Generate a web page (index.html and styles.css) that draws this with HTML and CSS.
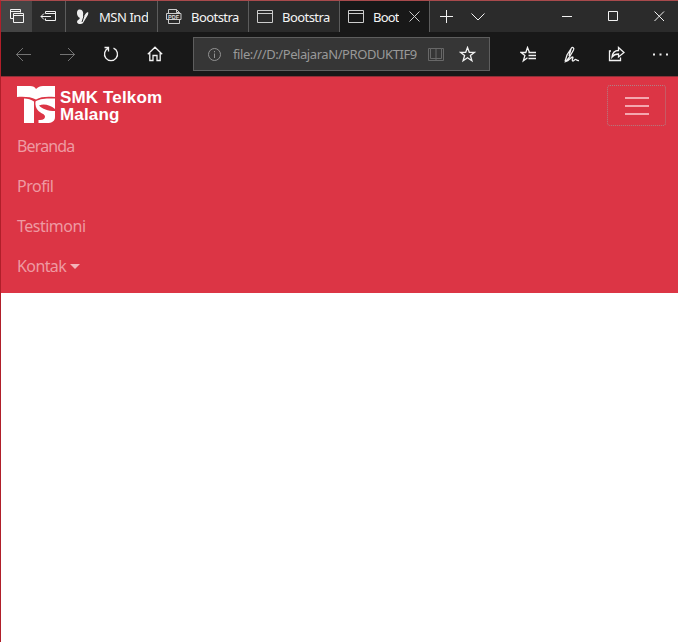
FILE: index.html
```html
<!DOCTYPE html>
<html lang="id">
<head>
<meta charset="utf-8">
<title>Bootstrap</title>
<link rel="stylesheet" href="styles.css">
</head>
<body>
<div class="window">
  <div class="tabs">
    <div class="tool lit"><svg width="16" height="16" viewBox="0 0 16 16"><path d="M4 10.500H1.500V1.500H11.500V4.500M1.500 3.500H11.500M4.500 5.500H14.500V14.500H4.500ZM4.500 7.500H14.500"/></svg></div>
    <div class="tool set"><svg width="17" height="12" viewBox="0 0 17 12"><path d="M5.500 3.500V1.500H15.500V10.500H5.500V8.500M5.500 3.500H15.500M1 6.500H11M4 3.500L1 6.500L4 9.500"/></svg></div>
    <div class="tab t1"><svg width="14" height="16" viewBox="0 0 14 16"><path class="fill" d="M2 1C5-.5 8 2 7 6L7 8C9 7 9 4 12 3C13 5 11 7 10 9L7 14C5 16 1 15 1 13C1 11 3 11 4 9C1 8 0 3 2 1Z"/><path class="cut" d="M8 7L6 13"/></svg><span>MSN Ind</span></div>
    <div class="tab t2"><svg width="16" height="17" viewBox="0 0 16 17"><path d="M2.500 5V1.500H10.500L13.500 4.500V5M10.500 1.500V4.500H13.500M2.500 12V15.500H13.500V12M.5 5.500H15V11.500H.5Z"/><text x="2" y="10.500">PDF</text></svg><span>Bootstra</span></div>
    <div class="tab t3"><svg width="17" height="14" viewBox="0 0 17 14"><path d="M.5.500H15.500V12.500H.5ZM.5 3.500H15.500"/></svg><span>Bootstra</span></div>
    <div class="tab t4"><svg width="17" height="14" viewBox="0 0 17 14"><path d="M.5.500H15.500V12.500H.5ZM.5 3.500H15.500"/></svg><span>Boot</span><svg class="x" width="11" height="11" viewBox="0 0 11 11"><path d="M.5.500L10.500 10.500M10.500.5L.5 10.500"/></svg></div>
    <div class="new"><svg width="13" height="13" viewBox="0 0 13 13"><path d="M0 6.500H13M6.500 0V13"/></svg></div>
    <div class="more"><svg width="14" height="8" viewBox="0 0 14 8"><path d="M.5.500L7 7L13.500.5"/></svg></div>
    <div class="caption">
      <div><svg width="11" height="11" viewBox="0 0 11 11"><path d="M0 5.500H10"/></svg></div>
      <div><svg width="11" height="11" viewBox="0 0 11 11"><path d="M.5.500H9.500V9.500H.5Z"/></svg></div>
      <div><svg width="11" height="11" viewBox="0 0 11 11"><path d="M.5.500L10 10M10 .5L.5 10"/></svg></div>
    </div>
  </div>
  <div class="bar">
    <div class="act dim"><svg width="15" height="15" viewBox="0 0 15 15"><path d="M0 7.500H15M7 1L.5 7.500L7 14"/></svg></div>
    <div class="act dim"><svg width="15" height="15" viewBox="0 0 15 15"><path d="M0 7.500H15M8 1L14.500 7.500L8 14"/></svg></div>
    <div class="act"><svg width="16" height="16" viewBox="0 0 16 16"><path class="mid" d="M10.500 2.200A6.500 6.500 0 1 1 5.500 2.200M1.500 1.500H5.500V5.500"/></svg></div>
    <div class="act"><svg width="16" height="16" viewBox="0 0 16 16"><path class="mid" d="M.8 8.200L8 1.200L15.200 8.200M2.800 7V14.500H6V9.500H10V14.500H13.200V7"/></svg></div>
    <div class="address">
      <svg class="info" width="13" height="13" viewBox="0 0 13 13"><circle cx="6.500" cy="6.500" r="6"/><path d="M6.500 3V4.300M6.500 5.500V10"/></svg>
      <span>file:///D:/PelajaraN/PRODUKTIF9</span>
      <svg class="book" width="16" height="15" viewBox="0 0 16 15"><path d="M2.500 1.500H.5V13.500H15.500V1.500H13.500M2.500 1.500H13.500V11.500H2.500ZM8 1.500V13.500"/></svg>
      <svg class="star" width="17" height="17" viewBox="0 0 17 17"><path class="mid" d="M8.500 1.500L10.300 6.300H15.500L11.400 9.500L12.900 14.700L8.500 11.700L4.100 14.700L5.600 9.500L1.500 6.300H6.700Z"/></svg>
    </div>
    <div class="right">
      <div><svg width="17" height="17" viewBox="0 0 17 17"><path class="mid" d="M10.500 6.500H9.500L7.500 1.500L5.800 6.500H1L4.900 9.500L3.300 14.800L7.500 11.800M8.500 6.500H16M8.500 9.500H16M8.500 12.500H16"/></svg></div>
      <div><svg width="16" height="17" viewBox="0 0 16 17"><path class="mid" d="M1 15.500L3 9L7.500 2C8.500.5 10.500 2 9.500 4L5.500 11L2 15.500C5 14.500 7 11 8.500 11C10 11 7 15 9 15C10.500 15 10.500 13 12 13.500C13 14 13 15 15 14.500M7 3L5 10"/></svg></div>
      <div><svg width="17" height="16" viewBox="0 0 17 16"><path class="mid" d="M3 5H1.500V14.500H12.500V11.500M4 11C4.500 7 6.500 4.500 10.500 4.500V1.500L16 6.500L10.500 11V8C7.500 8 5.500 9 4 11Z"/></svg></div>
      <div><svg width="15" height="3" viewBox="0 0 15 3"><path class="fill" d="M0 .5H2V2.500H0ZM6.500.5H8.500V2.500H6.500ZM13 .5H15V2.500H13Z"/></svg></div>
    </div>
  </div>
  <nav class="navbar">
    <div class="head">
      <div class="brand">
        <svg class="mark" width="40" height="40" viewBox="0 0 40 40"><path class="logo" d="M0 0H13C16 0 18 1 19 3C21 1 23 0 26 0H38V11C30 10.500 24 10.500 19 13.500C14 11 8 10.500 0 11ZM7 12.500C11 12.500 14 13.500 17 15.500V37H7ZM18.500 15.500C24 12 32 12.500 38 12.500V23C33 19 27 17.500 22 19.500C25 23 31 25 38 25V31C38 35 35 37 30 37H21.500V34C26 34.500 28 33 28 30.500C28 28 24 27.500 21.500 25C19 22.500 18 19 18.500 15.500Z"/></svg>
        <div class="name"><span>SMK Telkom</span><span>Malang</span></div>
      </div>
      <button class="toggler" aria-label="Menu"><i></i><i></i><i></i></button>
    </div>
    <a class="l1">Beranda</a>
    <a class="l2">Profil</a>
    <a class="l3">Testimoni</a>
    <a class="l4">Kontak<i class="caret"></i></a>
  </nav>
</div>
</body>
</html>
```
FILE: styles.css
```css
* { box-sizing: border-box; }
body { margin: 0; background: #fff; font-family: "Noto Sans", sans-serif; }
.window { width: 678px; height: 642px; border-left: 1px solid #b01f2a; border-top: 1px solid #a84a4c; overflow: hidden; }
svg { display: block; flex: none; fill: none; stroke: #f2f2f2; stroke-width: 1; }
.mid { stroke-width: 1.3; }
.fill { fill: #eee; stroke: none; }
.cut { stroke: #2b2b2b; }
svg text { font: bold 5.5px "Liberation Sans", sans-serif; fill: #ddd; stroke: none; }
.tabs { height: 31px; display: flex; background: #2b2b2b; }
.tool { display: flex; align-items: flex-start; justify-content: center; padding-top: 7px; }
.lit { width: 31px; background: #444; }
.set { width: 34px; padding-top: 9px; border-right: 1px solid #5c5c5c; }
.tab { display: flex; align-items: center; border-right: 1px solid #5c5c5c; color: #f4f4f4; font-size: 13px; white-space: nowrap; overflow: hidden; }
.tab svg { stroke: #ccc; }
.tab span { line-height: 20px; overflow: hidden; flex: none; }
.t1 { width: 92px; padding-left: 10px; }
.t1 span { margin-left: 9px; letter-spacing: -.45px; }
.t2 { width: 91px; padding-left: 8px; }
.t2 span, .t3 span { margin-left: 9px; letter-spacing: -.55px; }
.t3 { width: 91px; padding-left: 8px; }
.t3 span { margin-left: 8px; }
.t4 { width: 90px; padding-left: 8px; background: #181818; }
.t4 span { width: 26px; margin-left: 8px; letter-spacing: -.8px; }
.t4 .x { margin-left: 10px; }
.new, .more { width: 32px; display: flex; align-items: center; justify-content: center; }
.caption { margin-left: auto; display: flex; margin-right: -4px; }
.caption div { width: 46px; display: flex; align-items: center; justify-content: center; }
.bar { height: 44px; background: #181818; display: flex; align-items: center; }
.act { flex: none; width: 44px; display: flex; justify-content: center; }
.dim svg { stroke: #737373; }
.address { flex: none; width: 297px; height: 34px; margin-left: 16px; padding: 0 12px 0 14px; display: flex; align-items: center; background: #363636; border: 1px solid #5e5e5e; color: #999; font-size: 13px; }
.address span { flex: none; width: 186px; margin-left: 12px; white-space: nowrap; overflow: hidden; letter-spacing: -.42px; }
.info { stroke: #929292; }
.book { stroke: #686868; margin-left: 9px; }
.star { margin-left: 15px; }
.right { flex: none; margin-left: 16px; display: flex; }
.right div { flex: none; width: 44px; height: 20px; display: flex; align-items: center; justify-content: center; }
.navbar { height: 217px; padding: 8px 12px 0 16px; background: #dc3545; border-top: 1px solid #8c3038; }
.head { height: 41px; display: flex; justify-content: space-between; }
.brand { display: flex; color: #fff; }
.mark { margin-top: 1px; }
.logo { fill: #fff; stroke: none; fill-rule: evenodd; }
.name { display: flex; flex-direction: column; margin: 4px 0 0 3px; font: bold 17px/17px "Liberation Sans", sans-serif; letter-spacing: .15px; }
.toggler { width: 59px; height: 41px; padding: 0; display: flex; flex-direction: column; gap: 6px; align-items: center; justify-content: center; background: none; border: 1px dotted #b08084; border-radius: 3px; }
.toggler i { width: 24px; height: 2px; background: #f4a7af; }
.navbar a { display: flex; align-items: center; width: max-content; height: 40px; color: #ee9aa2; font-size: 16px; letter-spacing: -.5px; }
.navbar .l1 { letter-spacing: -.85px; }
.navbar .l4 { letter-spacing: -.6px; }
.caret { margin-left: 4px; border: 5px solid transparent; border-top-color: #f3b3b9; border-bottom: 0; }
```
